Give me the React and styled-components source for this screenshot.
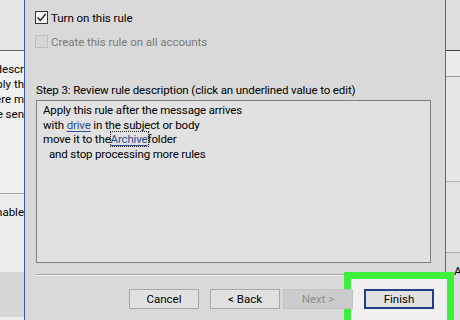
import React from "react";
import styled, { createGlobalStyle } from "styled-components";

const Global = createGlobalStyle`
  html, body { margin: 0; padding: 0; width: 460px; height: 320px; overflow: hidden; background: #e8e8e8; }
  body { font-family: Roboto, "Noto Sans", sans-serif; font-size: 11.5px; color: #000; }
`;

const Page = styled.div`
  display: flex;
  width: 460px;
  height: 320px;
  overflow: hidden;
`;

const Strip = styled.div`
  width: ${(p) => p.$w}px;
  flex-shrink: 0;
  display: flex;
  flex-direction: column;
  overflow: hidden;
`;

const Band = styled.div`
  height: ${(p) => p.$h}px;
  flex-shrink: 0;
  background: ${(p) => p.$bg};
  border-bottom: ${(p) => (p.$line ? `1px solid ${p.$line}` : "none")};
  padding-top: ${(p) => p.$pt || 0}px;
  display: flex;
  flex-direction: column;
  ${(p) => (p.$grow ? "flex: 1;" : "")}
`;

const ClipLine = styled.div`
  height: ${(p) => p.$h || 15}px;
  display: flex;
  justify-content: ${(p) => (p.$left ? "flex-start" : "flex-end")};
  white-space: nowrap;
  overflow: hidden;
  line-height: ${(p) => p.$h || 15}px;
  color: #000;
  font-size: 11.5px;
  padding-left: ${(p) => p.$pl || 0}px;
`;

const Dialog = styled.div`
  flex: 1;
  background: #d9d9d9;
  border-left: 1px solid #2d5ca8;
  border-right: 1px solid #3d6db5;
  display: flex;
  flex-direction: column;
  padding: 11px 0 0 10px;
  position: relative;
`;

const CheckRow = styled.label`
  display: flex;
  align-items: center;
  gap: 3px;
  height: 13px;
  margin-bottom: ${(p) => p.$mb}px;
  color: ${(p) => (p.$disabled ? "#7a7a7a" : "#000")};
  font-size: 11.5px;
  letter-spacing: -0.05px;
`;

const Box = styled.span`
  width: 11px;
  height: 11px;
  flex-shrink: 0;
  border: 1px solid ${(p) => (p.$disabled ? "#bdbdbd" : "#333")};
  background: ${(p) => (p.$disabled ? "#d6d6d6" : "#f4f4f4")};
  display: flex;
  align-items: center;
  justify-content: center;
`;

const StepLabel = styled.div`
  font-size: 11.5px;
  height: 15px;
  line-height: 15px;
  margin-left: 1px;
  margin-bottom: 2px;
  color: #000;
  white-space: nowrap;
  letter-spacing: -0.12px;
`;

const Description = styled.div`
  box-sizing: border-box;
  margin-left: 1px;
  margin-right: 14px;
  height: 163px;
  background: #e1e1e1;
  border: 1px solid #7f7f7f;
  padding: 2px 0 0 6px;
  display: flex;
  flex-direction: column;
`;

const DescLine = styled.div`
  height: 14.5px;
  line-height: 14.5px;
  white-space: nowrap;
  padding-left: ${(p) => p.$indent || 0}px;
  color: #000;
  letter-spacing: -0.15px;
`;

const Link = styled.span`
  color: #2a4f95;
  text-decoration: underline;
  text-underline-offset: 2px;
  outline: ${(p) => (p.$focus ? "1px dotted #222" : "none")};
  outline-offset: 0px;
`;

const Separator = styled.div`
  margin: 11px 1px 0 1px;
  height: 0;
  border-top: 1px solid #a4a4a4;
  border-bottom: 1px solid #f2f2f2;
`;

const Footer = styled.div`
  display: flex;
  justify-content: flex-end;
  align-items: center;
  margin-top: 13px;
  padding-right: 11px;
`;

const Button = styled.button`
  width: 70px;
  height: 20px;
  margin-left: ${(p) => p.$ml}px;
  font-family: Roboto, "Noto Sans", sans-serif;
  font-size: 11.5px;
  padding: 0;
  box-sizing: border-box;
  background: ${(p) => (p.$disabled ? "#cccccc" : "#e1e1e1")};
  color: ${(p) => (p.$disabled ? "#8c8c8c" : "#000")};
  border: ${(p) => (p.$primary ? "2px solid #1d3f87" : p.$disabled ? "1px solid #c2c2c2" : "1px solid #a9a9a9")};
  position: relative;
  z-index: 1;
`;

const FinishWrap = styled.div`
  position: relative;
  margin-left: 11px;
  display: flex;
`;

const Highlight = styled.div`
  position: absolute;
  left: -20px;
  right: -20px;
  top: -17px;
  bottom: -20px;
  border: 7px solid #3cf03c;
  background: #f0f0f0;
  z-index: 0;
`;

function Check({ checked, disabled }) {
  return (
    <Box $disabled={disabled}>
      {checked && (
        <svg width="11" height="11" viewBox="0 0 11 11">
          <path d="M1.5 5.5 L4.3 8.4 L9.6 2" fill="none" stroke="#222" strokeWidth="1.4" />
        </svg>
      )}
    </Box>
  );
}

export default function App() {
  return (
    <>
      <Global />
      <Page>
        <Strip $w={24}>
          <Band $h={50} $bg="#e6e6e6" $line="#666" />
          <Band $h={131} $bg="#f0f0f0" $line="#a6a6a6" $pt={11}>
            <ClipLine>Step 2: Edit the rule descr</ClipLine>
            <ClipLine>Apply th</ClipLine>
            <ClipLine>where m</ClipLine>
            <ClipLine>the sen</ClipLine>
          </Band>
          <Band $h={67} $bg="#ececec" $pt={11}>
            <ClipLine>Enable</ClipLine>
          </Band>
          <Band $h={45} $bg="#d6d6d6" />
          <Band $grow $bg="#ececec" />
        </Strip>
        <Dialog>
          <CheckRow $mb={11}>
            <Check checked />
            Turn on this rule
          </CheckRow>
          <CheckRow $mb={35} $disabled>
            <Check disabled />
            Create this rule on all accounts
          </CheckRow>
          <StepLabel>Step 3: Review rule description (click an underlined value to edit)</StepLabel>
          <Description>
            <DescLine>Apply this rule after the message arrives</DescLine>
            <DescLine>
              with <Link>drive</Link> in the subject or body
            </DescLine>
            <DescLine>
              move it to the<Link $focus>Archive</Link>folder
            </DescLine>
            <DescLine $indent={6}>and stop processing more rules</DescLine>
          </Description>
          <Separator />
          <Footer>
            <Button $ml={0}>Cancel</Button>
            <Button $ml={11}>&lt; Back</Button>
            <Button $ml={3} $disabled>Next &gt;</Button>
            <FinishWrap>
              <Highlight />
              <Button $ml={0} $primary>Finish</Button>
            </FinishWrap>
          </Footer>
        </Dialog>
        <Strip $w={14}>
          <Band $h={50} $bg="#dedede" $line="#444" />
          <Band $h={25} $bg="#ebebeb" $line="#9a9a9a" />
          <Band $h={104} $bg="#e6e6e6" $line="#b5b5b5" />
          <Band $h={70} $bg="#e3e3e3" $line="#b0b0b0" />
          <Band $grow $bg="#dcdcdc" $pt={11}>
            <ClipLine $left $pl={8}>A</ClipLine>
          </Band>
        </Strip>
      </Page>
    </>
  );
}
